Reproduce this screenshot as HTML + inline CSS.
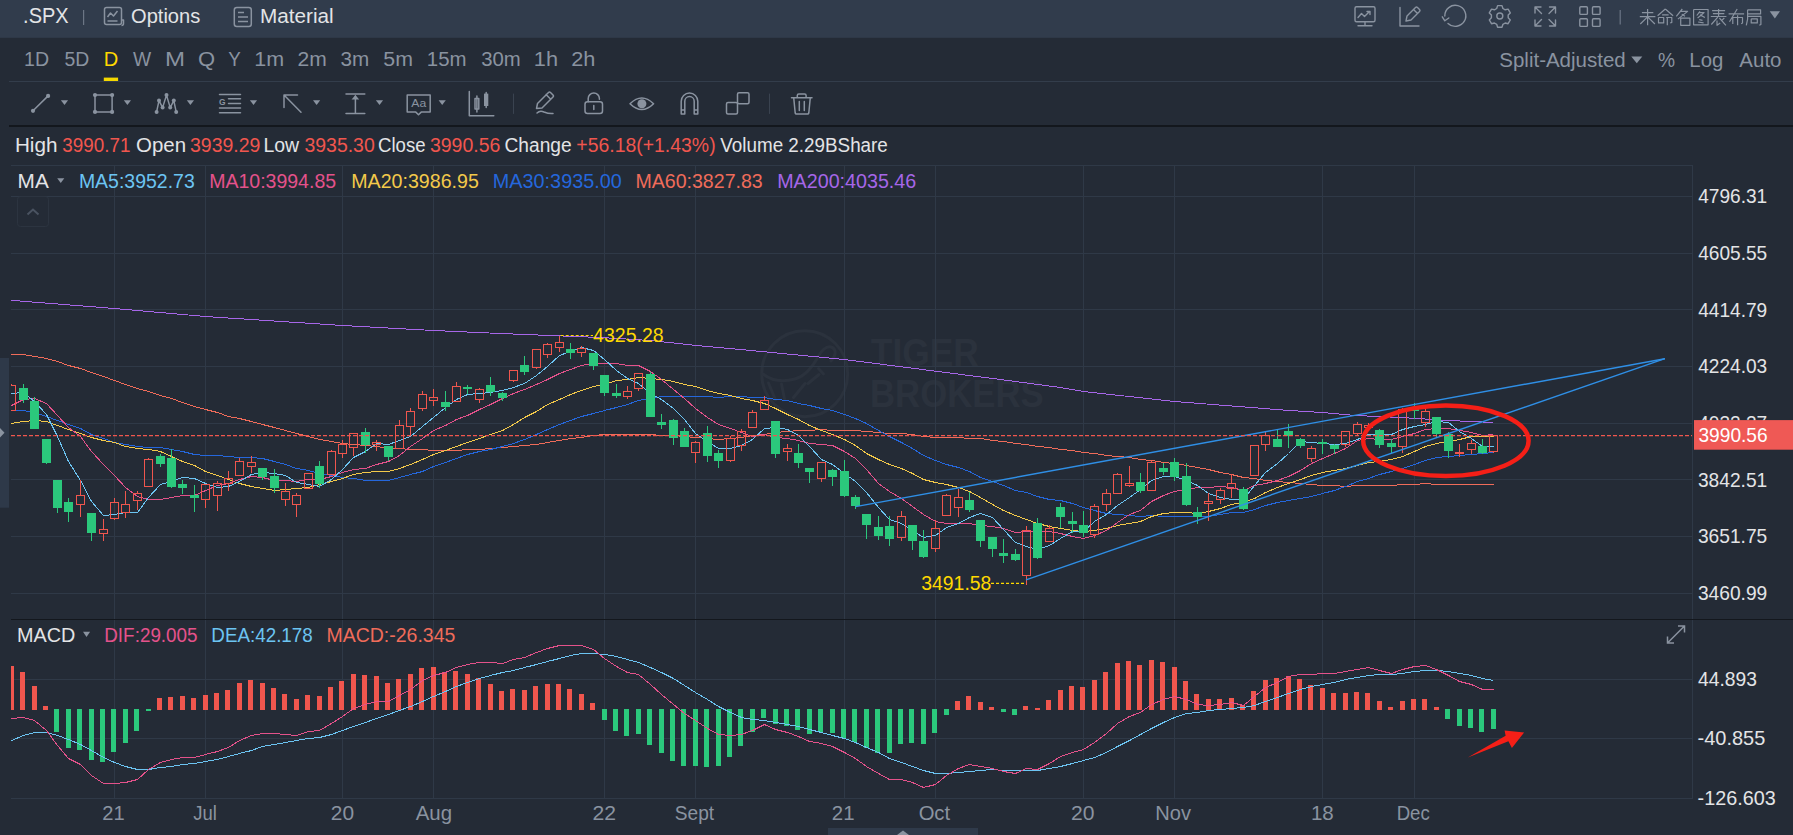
<!DOCTYPE html>
<html><head><meta charset="utf-8"><title>SPX</title>
<style>html,body{margin:0;padding:0;background:#242b36;overflow:hidden}svg{display:block;font-family:"Liberation Sans",sans-serif}</style>
</head><body>
<svg width="1793" height="835" viewBox="0 0 1793 835" font-family="Liberation Sans, sans-serif">
<rect x="0" y="0" width="1793" height="835" fill="#242b36"/>
<rect x="0" y="0" width="1793" height="37.8" fill="#313c4c"/>
<rect x="9" y="81" width="1784" height="1" fill="#333d4b"/>
<rect x="9" y="125" width="1784" height="2" fill="#13171d"/>
<rect x="11" y="619" width="1782" height="1" fill="#13171d"/>
<text x="23.08" y="23.3" fill="#e3e4e6" font-size="22.5" textLength="45.54" lengthAdjust="spacingAndGlyphs">.SPX</text>
<rect x="83" y="10" width="1.2" height="15" fill="#6c7685"/>
<g fill="none" stroke="#8a93a0" stroke-width="1.5" stroke-linejoin="round"><path d="M104.5,9.5 q0,-2 2,-2 h13 q2,0 2,2 v13 q0,2 -2,2 h-13 q-2,0 -2,-2 z"/><path d="M107.5,17 l3,-4 l3,3 l4,-5"/><path d="M107.5,21 h10"/><path d="M121.5,20 h2 v3.5 q0,2 -2,2"/></g>
<text x="131.05" y="23.3" fill="#e3e4e6" font-size="20.5" textLength="69.18" lengthAdjust="spacingAndGlyphs">Options</text>
<g fill="none" stroke="#8a93a0" stroke-width="1.5"><rect x="234.3" y="7.5" width="17" height="19" rx="2.5"/><path d="M238,12.5 h6 M238,17 h10 M238,21.5 h10"/></g>
<text x="260.00" y="23.4" fill="#e3e4e6" font-size="20.5" textLength="73.69" lengthAdjust="spacingAndGlyphs">Material</text>
<g fill="none" stroke="#8a93a0" stroke-width="1.4" stroke-linecap="round" stroke-linejoin="round"><rect x="1355" y="6.8" width="20" height="15" rx="1.5"/><path d="M1365,22 v3.5 M1358,25.8 h14"/><path d="M1358,17.5 l3.5,-4 l3,3 l5,-5 M1367,11.5 h3 v3"/><path d="M1400,7.5 v18.5 h19"/><path d="M1406,21 l1,-5 l8.5,-8.5 q1,-1 2,0 l2,2 q1,1 0,2 l-8.5,8.5 z M1413.5,9.5 l3.8,3.8"/><path d="M1444.8,16 A10.5,10.5 0 1 1 1448,23.4"/><path d="M1442.3,16.8 l2.5,4 l4,-2.8"/><circle cx="1499.8" cy="16" r="3"/><path d="M1497.6,5.6 h4.4 l0.9,2.9 l2.3,1.3 l2.9,-0.7 l2.2,3.8 l-2.1,2.2 v2.6 l2.1,2.2 l-2.2,3.8 l-2.9,-0.7 l-2.3,1.3 l-0.9,2.9 h-4.4 l-0.9,-2.9 l-2.3,-1.3 l-2.9,0.7 l-2.2,-3.8 l2.1,-2.2 v-2.6 l-2.1,-2.2 l2.2,-3.8 l2.9,0.7 l2.3,-1.3 z"/><path d="M1535,13 v-6 h6 M1535,7 l6.5,6.5 M1555.5,13 v-6 h-6 M1555.5,7 l-6.5,6.5 M1535,20 v6 h6 M1535,26 l6.5,-6.5 M1555.5,20 v6 h-6 M1555.5,26 l-6.5,-6.5"/><rect x="1579.8" y="6.8" width="7.6" height="7.6" rx="1"/><rect x="1592.5" y="6.8" width="7.6" height="7.6" rx="1"/><rect x="1579.8" y="18.8" width="7.6" height="7.6" rx="1"/><rect x="1592.5" y="18.8" width="7.6" height="7.6" rx="1"/></g>
<rect x="1619.6" y="10" width="1.2" height="14.5" fill="#6c7685"/>
<path d="M1641.9,12.6 L1653.3,12.6 M1639.8,16.7 L1655.4,16.7 M1647.6,9.0 L1647.6,25.3 M1647.3,17.1 L1640.3,24.0 M1647.9,17.1 L1654.9,24.0 M1665.3,9.0 L1657.6,15.8 M1665.3,9.0 L1673.1,15.8 M1662.1,14.9 L1668.6,14.9 M1658.5,17.5 L1663.7,17.5 L1663.7,22.9 L1658.5,22.9 L1658.5,17.5 M1666.2,17.5 L1671.8,17.5 L1671.8,22.4 L1670.2,23.0 M1667.3,17.5 L1667.3,25.3 M1682.3,9.0 L1676.3,16.3 M1680.3,11.4 L1687.6,11.4 L1677.9,19.1 M1681.8,14.2 L1685.0,16.3 M1680.7,18.1 L1689.9,18.1 L1689.9,25.3 L1680.7,25.3 L1680.7,18.1 M1693.6,9.5 L1708.1,9.5 L1708.1,24.8 L1693.6,24.8 L1693.6,9.5 M1700.0,11.3 L1696.8,15.5 M1698.4,12.6 L1704.1,12.6 L1697.6,18.0 M1700.0,14.9 L1704.9,17.5 M1699.2,19.6 L1702.5,20.4 M1698.1,22.0 L1703.6,22.9 M1712.1,10.6 L1725.1,10.6 M1712.9,13.6 L1724.3,13.6 M1710.8,16.5 L1726.4,16.5 M1718.6,9.0 L1718.6,16.5 M1717.8,17.1 L1711.3,24.5 M1717.0,20.4 L1717.0,25.3 L1720.2,22.9 M1719.4,18.0 L1725.9,25.3 M1724.3,18.0 L1721.8,20.4 M1728.6,13.9 L1744.1,13.9 M1737.2,9.0 L1729.5,21.7 M1732.8,17.5 L1732.8,24.0 M1732.8,17.5 L1742.5,17.5 L1742.5,23.0 L1741.2,23.7 M1737.6,15.2 L1737.6,25.3 M1747.6,9.8 L1760.6,9.8 L1760.6,13.9 L1747.6,13.9 M1747.6,9.8 L1747.6,19.1 L1746.3,25.3 M1747.6,16.3 L1760.9,16.3 L1760.9,24.5 L1759.3,25.3 M1751.2,18.8 L1757.3,18.8 L1757.3,22.9 L1751.2,22.9 L1751.2,18.8" fill="none" stroke="#8a93a0" stroke-width="1.2" stroke-linejoin="round"/>
<path d="M1769.7,11.2 h10.3 l-5.15,7.2 z" fill="#8a93a0"/>
<text x="24.01" y="65.9" fill="#8a93a0" font-size="20" textLength="25.03" lengthAdjust="spacingAndGlyphs">1D</text>
<text x="64.42" y="65.9" fill="#8a93a0" font-size="20" textLength="24.81" lengthAdjust="spacingAndGlyphs">5D</text>
<text x="103.85" y="65.9" fill="#ffd800" font-size="20" textLength="14.51" lengthAdjust="spacingAndGlyphs">D</text>
<text x="132.92" y="65.9" fill="#8a93a0" font-size="20" textLength="18.15" lengthAdjust="spacingAndGlyphs">W</text>
<text x="165.13" y="65.9" fill="#8a93a0" font-size="20" textLength="20.05" lengthAdjust="spacingAndGlyphs">M</text>
<text x="197.96" y="65.9" fill="#8a93a0" font-size="20" textLength="17.09" lengthAdjust="spacingAndGlyphs">Q</text>
<text x="228.19" y="65.9" fill="#8a93a0" font-size="20" textLength="12.53" lengthAdjust="spacingAndGlyphs">Y</text>
<text x="254.36" y="65.9" fill="#8a93a0" font-size="20" textLength="29.85" lengthAdjust="spacingAndGlyphs">1m</text>
<text x="297.44" y="65.9" fill="#8a93a0" font-size="20" textLength="29.25" lengthAdjust="spacingAndGlyphs">2m</text>
<text x="340.61" y="65.9" fill="#8a93a0" font-size="20" textLength="28.75" lengthAdjust="spacingAndGlyphs">3m</text>
<text x="383.35" y="65.9" fill="#8a93a0" font-size="20" textLength="29.66" lengthAdjust="spacingAndGlyphs">5m</text>
<text x="426.85" y="65.9" fill="#8a93a0" font-size="20" textLength="39.70" lengthAdjust="spacingAndGlyphs">15m</text>
<text x="481.23" y="65.9" fill="#8a93a0" font-size="20" textLength="39.51" lengthAdjust="spacingAndGlyphs">30m</text>
<text x="533.85" y="65.9" fill="#8a93a0" font-size="20" textLength="24.17" lengthAdjust="spacingAndGlyphs">1h</text>
<text x="571.21" y="65.9" fill="#8a93a0" font-size="20" textLength="24.21" lengthAdjust="spacingAndGlyphs">2h</text>
<rect x="103.8" y="77.6" width="14.3" height="3.4" fill="#f5d800"/>
<text x="1499.27" y="66.8" fill="#8a93a0" font-size="20" textLength="126.45" lengthAdjust="spacingAndGlyphs">Split-Adjusted</text>
<path d="M1631.3,56.4 h11 l-5.5,6.8 z" fill="#8a93a0"/>
<text x="1658.12" y="66.8" fill="#8a93a0" font-size="20" textLength="17.07" lengthAdjust="spacingAndGlyphs">%</text>
<text x="1689.33" y="66.8" fill="#8a93a0" font-size="20" textLength="33.98" lengthAdjust="spacingAndGlyphs">Log</text>
<text x="1739.36" y="66.8" fill="#8a93a0" font-size="20" textLength="42.10" lengthAdjust="spacingAndGlyphs">Auto</text>
<g fill="none" stroke="#8a93a0" stroke-width="1.5" stroke-linecap="round" stroke-linejoin="round"><path d="M33,110.8 L48.1,95.9"/><rect x="95" y="95.1" width="17.1" height="16.8"/><path d="M156.6,111.9 L159,100.6 L162.6,107.6 L166.5,95.1 L170.2,107.6 L173.8,100.6 L176.2,111.9"/><path d="M219.5,94.4 h21 M228.5,98.8 h12 M228.5,103.4 h12 M219.5,108.1 h21 M219.5,112.8 h21"/><path d="M284,95 L301,112.3 M284,95 h13.5 M284,95 v12.5"/><path d="M346,93.9 h18.8 M346,113.4 h18.8 M355.4,96 v17.4"/><path d="M407.2,95.1 h23 v17 h-9 l-2.7,2.6 l-2.7,-2.6 h-8.6 z"/><path d="M469.3,91.5 v24.3 h24.5 M476.9,96 v16 M486.2,92.5 v15"/><rect x="475" y="98.5" width="3.8" height="10.5"/><path d="M537,113 q3,-3 7,-1 q5,2 9,1.5"/><path d="M536.5,108.5 l1,-5 l11,-11 q1,-1 2,0 l2.5,2.5 q1,1 0,2 l-11,11 z M546,94.5 l4,4"/><rect x="585" y="101.8" width="17.5" height="11.7" rx="2.5"/><path d="M588.2,101.8 v-3.2 a5.6,5.6 0 0 1 11.2,0 v0.6 M593.8,105.5 v4"/><path d="M630,103.7 q11.8,-11.5 23.6,0 q-11.8,11.5 -23.6,0 z"/><path d="M681.2,114 v-12.7 a8.3,8.3 0 0 1 16.6,0 v12.7 h-3.6 v-12.7 a4.7,4.7 0 0 0 -9.4,0 v12.7 z M681.2,110 h3.6 M694.2,110 h3.6"/><rect x="726.5" y="102.5" width="11" height="11.5" rx="1.5"/><rect x="737.5" y="92.7" width="11.5" height="11" rx="1.5"/><path d="M791.5,97.8 h20.5 M797.3,97.8 v-2.2 q0,-1.5 1.5,-1.5 h5.8 q1.5,0 1.5,1.5 v2.2 M793.8,98.5 l1.4,14.5 q0.2,1 1.2,1 h11.2 q1,0 1.2,-1 l1.4,-14.5 M799.3,101.5 v9 M804.3,101.5 v9"/></g>
<g fill="#8a93a0"><circle cx="33" cy="110.8" r="2.1"/><circle cx="48.1" cy="95.9" r="2.1"/><circle cx="95" cy="95.1" r="2.1"/><circle cx="112.1" cy="95.1" r="2.1"/><circle cx="95" cy="111.9" r="2.1"/><circle cx="112.1" cy="111.9" r="2.1"/><circle cx="156.6" cy="111.9" r="2"/><circle cx="159" cy="100.6" r="2"/><circle cx="162.6" cy="107.6" r="2"/><circle cx="166.5" cy="95.1" r="2"/><circle cx="170.2" cy="107.6" r="2"/><circle cx="173.8" cy="100.6" r="2"/><circle cx="176.2" cy="111.9" r="2"/><path d="M355.4,95 l-3.8,4.5 h7.6 z"/><rect x="484" y="93.6" width="4.3" height="12.4"/><circle cx="641.9" cy="103.7" r="4.5"/></g>
<text x="218.95" y="105.2" fill="#8a93a0" font-size="9" font-weight="bold" textLength="6.57" lengthAdjust="spacingAndGlyphs">G</text>
<text x="411.28" y="106.9" fill="#8a93a0" font-size="11" textLength="14.92" lengthAdjust="spacingAndGlyphs">Aa</text>
<path d="M60.9,100.3 h7.2 l-3.6,4.7 z" fill="#8a93a0"/>
<path d="M123.8,100.3 h7.2 l-3.6,4.7 z" fill="#8a93a0"/>
<path d="M186.8,100.3 h7.2 l-3.6,4.7 z" fill="#8a93a0"/>
<path d="M249.9,100.3 h7.2 l-3.6,4.7 z" fill="#8a93a0"/>
<path d="M313,100.3 h7.2 l-3.6,4.7 z" fill="#8a93a0"/>
<path d="M375.9,100.3 h7.2 l-3.6,4.7 z" fill="#8a93a0"/>
<path d="M438.6,100.3 h7.2 l-3.6,4.7 z" fill="#8a93a0"/>
<rect x="513" y="93.6" width="1" height="20.3" fill="#3a4350"/>
<rect x="769" y="93.6" width="1" height="20.3" fill="#3a4350"/>
<text x="14.90" y="152" fill="#e3e4e6" font-size="20" textLength="42.54" lengthAdjust="spacingAndGlyphs">High</text>
<text x="62.28" y="152" fill="#f0564e" font-size="20" textLength="68.14" lengthAdjust="spacingAndGlyphs">3990.71</text>
<text x="136.03" y="152" fill="#e3e4e6" font-size="20" textLength="50.00" lengthAdjust="spacingAndGlyphs">Open</text>
<text x="190.06" y="152" fill="#f0564e" font-size="20" textLength="70.36" lengthAdjust="spacingAndGlyphs">3939.29</text>
<text x="263.40" y="152" fill="#e3e4e6" font-size="20" textLength="35.75" lengthAdjust="spacingAndGlyphs">Low</text>
<text x="304.46" y="152" fill="#f0564e" font-size="20" textLength="70.30" lengthAdjust="spacingAndGlyphs">3935.30</text>
<text x="378.06" y="152" fill="#e3e4e6" font-size="20" textLength="47.47" lengthAdjust="spacingAndGlyphs">Close</text>
<text x="429.96" y="152" fill="#f0564e" font-size="20" textLength="70.40" lengthAdjust="spacingAndGlyphs">3990.56</text>
<text x="504.53" y="152" fill="#e3e4e6" font-size="20" textLength="67.12" lengthAdjust="spacingAndGlyphs">Change</text>
<text x="576.35" y="152" fill="#f0564e" font-size="20" textLength="139.25" lengthAdjust="spacingAndGlyphs">+56.18(+1.43%)</text>
<text x="720.32" y="152" fill="#e3e4e6" font-size="20" textLength="167.51" lengthAdjust="spacingAndGlyphs">Volume 2.29BShare</text>
<g fill="none" stroke="#2b323d" stroke-width="3" stroke-linecap="round" stroke-linejoin="round"><circle cx="804.7" cy="373.7" r="43"/><path d="M763,374 C772,381 784,382 795,379 C806,376 813,366 818,357 C822,350 826,346 831,347 C837,349 836,356 831,361"/><path d="M768.5,383 L775.5,400 M781.5,384 L784.5,399 M793.5,397.5 L805,383.5 M808,383.5 L819,374.5 M818.5,368.5 L823.5,374"/></g>
<text x="870.80" y="365.7" fill="#2b323d" font-size="38" font-weight="bold" textLength="108.12" lengthAdjust="spacingAndGlyphs">TIGER</text>
<text x="869.98" y="407.3" fill="#2b323d" font-size="38" font-weight="bold" textLength="173.78" lengthAdjust="spacingAndGlyphs">BROKERS</text>
<g fill="#2f3947">
<rect x="11" y="165" width="1682" height="1"/>
<rect x="11" y="196" width="1682" height="1"/>
<rect x="11" y="253" width="1682" height="1"/>
<rect x="11" y="309" width="1682" height="1"/>
<rect x="11" y="366" width="1682" height="1"/>
<rect x="11" y="423" width="1682" height="1"/>
<rect x="11" y="479" width="1682" height="1"/>
<rect x="11" y="536" width="1682" height="1"/>
<rect x="11" y="593" width="1682" height="1"/>
<rect x="11" y="679" width="1682" height="1"/>
<rect x="11" y="738" width="1682" height="1"/>
<rect x="11" y="798" width="1682" height="1"/>
<rect x="1692" y="165" width="1" height="454"/>
<rect x="1692" y="620" width="1" height="179"/>
<rect x="114" y="165" width="1" height="454"/>
<rect x="114" y="620" width="1" height="179"/>
<rect x="205" y="165" width="1" height="454"/>
<rect x="205" y="620" width="1" height="179"/>
<rect x="342" y="165" width="1" height="454"/>
<rect x="342" y="620" width="1" height="179"/>
<rect x="433" y="165" width="1" height="454"/>
<rect x="433" y="620" width="1" height="179"/>
<rect x="604" y="165" width="1" height="454"/>
<rect x="604" y="620" width="1" height="179"/>
<rect x="695" y="165" width="1" height="454"/>
<rect x="695" y="620" width="1" height="179"/>
<rect x="844" y="165" width="1" height="454"/>
<rect x="844" y="620" width="1" height="179"/>
<rect x="935" y="165" width="1" height="454"/>
<rect x="935" y="620" width="1" height="179"/>
<rect x="1083" y="165" width="1" height="454"/>
<rect x="1083" y="620" width="1" height="179"/>
<rect x="1174" y="165" width="1" height="454"/>
<rect x="1174" y="620" width="1" height="179"/>
<rect x="1322" y="165" width="1" height="454"/>
<rect x="1322" y="620" width="1" height="179"/>
<rect x="1414" y="165" width="1" height="454"/>
<rect x="1414" y="620" width="1" height="179"/>
</g>
<text x="17.60" y="187.8" fill="#e3e4e6" font-size="19.7" textLength="31.14" lengthAdjust="spacingAndGlyphs">MA</text>
<path d="M57.2,178.2 h7.1 l-3.55,4.8 z" fill="#8a93a0"/>
<text x="78.90" y="187.8" fill="#6cc4f2" font-size="19.7" textLength="115.85" lengthAdjust="spacingAndGlyphs">MA5:3952.73</text>
<text x="209.20" y="187.8" fill="#e4528b" font-size="19.7" textLength="126.92" lengthAdjust="spacingAndGlyphs">MA10:3994.85</text>
<text x="351.29" y="187.8" fill="#f3c94a" font-size="19.7" textLength="127.53" lengthAdjust="spacingAndGlyphs">MA20:3986.95</text>
<text x="492.87" y="187.8" fill="#2567dc" font-size="19.7" textLength="128.90" lengthAdjust="spacingAndGlyphs">MA30:3935.00</text>
<text x="635.39" y="187.8" fill="#f06c5a" font-size="19.7" textLength="127.37" lengthAdjust="spacingAndGlyphs">MA60:3827.83</text>
<text x="777.18" y="187.8" fill="#a666e8" font-size="19.7" textLength="139.08" lengthAdjust="spacingAndGlyphs">MA200:4035.46</text>
<rect x="17.5" y="196.5" width="31" height="30" rx="3" fill="none" stroke="#2c3440" stroke-width="1"/>
<path d="M27.5,214.5 l5.5,-5 l5.5,5" fill="none" stroke="#4a5361" stroke-width="2"/>
<defs><clipPath id="cp"><rect x="11" y="166" width="1681.5" height="452"/></clipPath><clipPath id="cm"><rect x="11" y="620" width="1681.5" height="178"/></clipPath></defs>
<g clip-path="url(#cp)">
<polyline points="0.5,354.5 11.5,354.5 23.5,354.5 34.5,356.5 46.5,358.5 57.5,361.5 68.5,365.5 80.5,368.5 91.5,372.5 103.5,376.5 114.5,380.5 125.5,384.5 137.5,388.5 148.5,391.5 160.5,395.5 171.5,398.5 182.5,402.5 194.5,406.5 205.5,409.5 217.5,412.5 228.5,416.5 239.5,418.5 251.5,421.5 262.5,424.5 274.5,427.5 285.5,430.5 296.5,433.5 308.5,436.5 319.5,439.5 331.5,441.5 342.5,443.5 353.5,444.5 365.5,445.5 376.5,446.5 388.5,448.5 399.5,448.5 410.5,449.5 422.5,449.5 433.5,450.5 445.5,450.5 456.5,450.5 467.5,449.5 479.5,449.5 490.5,448.5 502.5,447.5 513.5,446.5 524.5,445.5 536.5,444.5 547.5,442.5 559.5,440.5 570.5,438.5 581.5,437.5 593.5,435.5 604.5,434.5 616.5,434.5 627.5,434.5 638.5,434.5 650.5,434.5 661.5,435.5 673.5,435.5 684.5,436.5 695.5,437.5 707.5,438.5 718.5,439.5 730.5,438.5 741.5,437.5 752.5,435.5 764.5,434.5 775.5,432.5 787.5,431.5 798.5,430.5 809.5,430.5 821.5,429.5 832.5,430.5 844.5,430.5 855.5,430.5 866.5,431.5 878.5,432.5 889.5,433.5 901.5,433.5 912.5,434.5 923.5,436.5 935.5,437.5 946.5,437.5 958.5,437.5 969.5,438.5 980.5,438.5 992.5,440.5 1003.5,441.5 1015.5,443.5 1026.5,444.5 1037.5,446.5 1049.5,447.5 1060.5,449.5 1072.5,450.5 1083.5,452.5 1094.5,453.5 1106.5,455.5 1117.5,456.5 1129.5,457.5 1140.5,459.5 1151.5,460.5 1163.5,462.5 1174.5,463.5 1186.5,465.5 1197.5,467.5 1208.5,469.5 1220.5,472.5 1231.5,474.5 1243.5,477.5 1254.5,478.5 1265.5,480.5 1277.5,481.5 1288.5,482.5 1300.5,483.5 1311.5,484.5 1322.5,485.5 1334.5,485.5 1345.5,486.5 1357.5,485.5 1368.5,485.5 1379.5,485.5 1391.5,485.5 1402.5,484.5 1414.5,484.5 1425.5,483.5 1436.5,484.5 1448.5,484.5 1459.5,484.5 1471.5,484.5 1482.5,484.5 1493.5,484.5" fill="none" stroke="#f06c5a" stroke-width="1" stroke-linejoin="round" shape-rendering="crispEdges"/>
<polyline points="0.5,408.5 11.5,410.5 23.5,410.5 34.5,412.5 46.5,416.5 57.5,420.5 68.5,424.5 80.5,428.5 91.5,434.5 103.5,438.5 114.5,442.5 125.5,444.5 137.5,446.5 148.5,447.5 160.5,447.5 171.5,449.5 182.5,451.5 194.5,454.5 205.5,455.5 217.5,455.5 228.5,456.5 239.5,457.5 251.5,457.5 262.5,458.5 274.5,461.5 285.5,464.5 296.5,468.5 308.5,470.5 319.5,473.5 331.5,475.5 342.5,477.5 353.5,478.5 365.5,480.5 376.5,480.5 388.5,480.5 399.5,477.5 410.5,474.5 422.5,471.5 433.5,466.5 445.5,462.5 456.5,458.5 467.5,454.5 479.5,451.5 490.5,449.5 502.5,446.5 513.5,443.5 524.5,439.5 536.5,434.5 547.5,429.5 559.5,424.5 570.5,420.5 581.5,416.5 593.5,413.5 604.5,410.5 616.5,407.5 627.5,404.5 638.5,400.5 650.5,398.5 661.5,396.5 673.5,396.5 684.5,396.5 695.5,396.5 707.5,396.5 718.5,397.5 730.5,396.5 741.5,396.5 752.5,397.5 764.5,397.5 775.5,399.5 787.5,400.5 798.5,403.5 809.5,405.5 821.5,408.5 832.5,410.5 844.5,414.5 855.5,418.5 866.5,423.5 878.5,430.5 889.5,436.5 901.5,442.5 912.5,448.5 923.5,455.5 935.5,460.5 946.5,464.5 958.5,467.5 969.5,471.5 980.5,477.5 992.5,481.5 1003.5,485.5 1015.5,490.5 1026.5,492.5 1037.5,496.5 1049.5,499.5 1060.5,500.5 1072.5,503.5 1083.5,507.5 1094.5,510.5 1106.5,513.5 1117.5,514.5 1129.5,515.5 1140.5,516.5 1151.5,515.5 1163.5,516.5 1174.5,516.5 1186.5,516.5 1197.5,516.5 1208.5,516.5 1220.5,514.5 1231.5,512.5 1243.5,512.5 1254.5,509.5 1265.5,505.5 1277.5,502.5 1288.5,500.5 1300.5,498.5 1311.5,496.5 1322.5,493.5 1334.5,490.5 1345.5,486.5 1357.5,481.5 1368.5,478.5 1379.5,474.5 1391.5,471.5 1402.5,468.5 1414.5,464.5 1425.5,460.5 1436.5,457.5 1448.5,456.5 1459.5,455.5 1471.5,454.5 1482.5,453.5 1493.5,452.5" fill="none" stroke="#2567dc" stroke-width="1" stroke-linejoin="round" shape-rendering="crispEdges"/>
<polyline points="0.5,426.5 11.5,423.5 23.5,421.5 34.5,420.5 46.5,421.5 57.5,425.5 68.5,429.5 80.5,433.5 91.5,437.5 103.5,440.5 114.5,442.5 125.5,446.5 137.5,448.5 148.5,449.5 160.5,451.5 171.5,456.5 182.5,461.5 194.5,465.5 205.5,471.5 217.5,475.5 228.5,479.5 239.5,483.5 251.5,486.5 262.5,488.5 274.5,490.5 285.5,489.5 296.5,488.5 308.5,487.5 319.5,484.5 331.5,481.5 342.5,478.5 353.5,474.5 365.5,472.5 376.5,471.5 388.5,471.5 399.5,468.5 410.5,464.5 422.5,459.5 433.5,454.5 445.5,450.5 456.5,446.5 467.5,442.5 479.5,438.5 490.5,434.5 502.5,430.5 513.5,424.5 524.5,417.5 536.5,411.5 547.5,404.5 559.5,399.5 570.5,394.5 581.5,390.5 593.5,386.5 604.5,384.5 616.5,380.5 627.5,379.5 638.5,377.5 650.5,378.5 661.5,379.5 673.5,381.5 684.5,384.5 695.5,386.5 707.5,390.5 718.5,393.5 730.5,395.5 741.5,398.5 752.5,400.5 764.5,403.5 775.5,408.5 787.5,414.5 798.5,419.5 809.5,425.5 821.5,430.5 832.5,434.5 844.5,439.5 855.5,445.5 866.5,453.5 878.5,459.5 889.5,464.5 901.5,468.5 912.5,473.5 923.5,479.5 935.5,482.5 946.5,484.5 958.5,487.5 969.5,491.5 980.5,497.5 992.5,504.5 1003.5,510.5 1015.5,515.5 1026.5,519.5 1037.5,523.5 1049.5,526.5 1060.5,528.5 1072.5,530.5 1083.5,531.5 1094.5,530.5 1106.5,528.5 1117.5,525.5 1129.5,523.5 1140.5,521.5 1151.5,516.5 1163.5,513.5 1174.5,512.5 1186.5,512.5 1197.5,513.5 1208.5,511.5 1220.5,508.5 1231.5,504.5 1243.5,502.5 1254.5,498.5 1265.5,492.5 1277.5,487.5 1288.5,483.5 1300.5,479.5 1311.5,475.5 1322.5,472.5 1334.5,470.5 1345.5,468.5 1357.5,465.5 1368.5,462.5 1379.5,461.5 1391.5,459.5 1402.5,456.5 1414.5,451.5 1425.5,446.5 1436.5,443.5 1448.5,441.5 1459.5,439.5 1471.5,436.5 1482.5,436.5 1493.5,436.5" fill="none" stroke="#f3c94a" stroke-width="1" stroke-linejoin="round" shape-rendering="crispEdges"/>
<polyline points="0.5,410.5 11.5,405.5 23.5,399.5 34.5,398.5 46.5,403.5 57.5,415.5 68.5,427.5 80.5,436.5 91.5,451.5 103.5,464.5 114.5,475.5 125.5,487.5 137.5,496.5 148.5,499.5 160.5,499.5 171.5,497.5 182.5,495.5 194.5,495.5 205.5,490.5 217.5,485.5 228.5,483.5 239.5,479.5 251.5,476.5 262.5,477.5 274.5,480.5 285.5,480.5 296.5,481.5 308.5,479.5 319.5,479.5 331.5,476.5 342.5,472.5 353.5,469.5 365.5,468.5 376.5,464.5 388.5,461.5 399.5,455.5 410.5,446.5 422.5,438.5 433.5,430.5 445.5,425.5 456.5,419.5 467.5,415.5 479.5,409.5 490.5,404.5 502.5,398.5 513.5,393.5 524.5,389.5 536.5,384.5 547.5,379.5 559.5,373.5 570.5,369.5 581.5,365.5 593.5,363.5 604.5,363.5 616.5,363.5 627.5,365.5 638.5,365.5 650.5,371.5 661.5,379.5 673.5,389.5 684.5,398.5 695.5,408.5 707.5,417.5 718.5,424.5 730.5,428.5 741.5,432.5 752.5,436.5 764.5,434.5 775.5,437.5 787.5,438.5 798.5,440.5 809.5,443.5 821.5,444.5 832.5,445.5 844.5,451.5 855.5,458.5 866.5,469.5 878.5,483.5 889.5,491.5 901.5,498.5 912.5,506.5 923.5,514.5 935.5,521.5 946.5,523.5 958.5,523.5 969.5,523.5 980.5,525.5 992.5,526.5 1003.5,528.5 1015.5,532.5 1026.5,531.5 1037.5,531.5 1049.5,531.5 1060.5,533.5 1072.5,536.5 1083.5,538.5 1094.5,535.5 1106.5,530.5 1117.5,522.5 1129.5,514.5 1140.5,510.5 1151.5,501.5 1163.5,495.5 1174.5,491.5 1186.5,489.5 1197.5,487.5 1208.5,487.5 1220.5,486.5 1231.5,487.5 1243.5,490.5 1254.5,485.5 1265.5,483.5 1277.5,480.5 1288.5,476.5 1300.5,470.5 1311.5,463.5 1322.5,458.5 1334.5,453.5 1345.5,448.5 1357.5,440.5 1368.5,438.5 1379.5,439.5 1391.5,439.5 1402.5,436.5 1414.5,433.5 1425.5,429.5 1436.5,428.5 1448.5,428.5 1459.5,430.5 1471.5,432.5 1482.5,435.5 1493.5,434.5" fill="none" stroke="#e4528b" stroke-width="1" stroke-linejoin="round" shape-rendering="crispEdges"/>
<polyline points="0.5,394.5 11.5,393.5 23.5,392.5 34.5,401.5 46.5,414.5 57.5,436.5 68.5,461.5 80.5,480.5 91.5,501.5 103.5,515.5 114.5,514.5 125.5,512.5 137.5,512.5 148.5,497.5 160.5,484.5 171.5,481.5 182.5,477.5 194.5,478.5 205.5,483.5 217.5,487.5 228.5,486.5 239.5,481.5 251.5,474.5 262.5,472.5 274.5,473.5 285.5,475.5 296.5,482.5 308.5,484.5 319.5,486.5 331.5,479.5 342.5,469.5 353.5,457.5 365.5,451.5 376.5,443.5 388.5,444.5 399.5,440.5 410.5,436.5 422.5,426.5 433.5,417.5 445.5,407.5 456.5,399.5 467.5,394.5 479.5,393.5 490.5,392.5 502.5,390.5 513.5,387.5 524.5,383.5 536.5,375.5 547.5,366.5 559.5,355.5 570.5,351.5 581.5,347.5 593.5,350.5 604.5,359.5 616.5,370.5 627.5,378.5 638.5,383.5 650.5,393.5 661.5,399.5 673.5,408.5 684.5,419.5 695.5,433.5 707.5,441.5 718.5,448.5 730.5,448.5 741.5,445.5 752.5,439.5 764.5,428.5 775.5,427.5 787.5,429.5 798.5,435.5 809.5,446.5 821.5,459.5 832.5,464.5 844.5,473.5 855.5,481.5 866.5,492.5 878.5,507.5 889.5,519.5 901.5,523.5 912.5,530.5 923.5,537.5 935.5,535.5 946.5,527.5 958.5,523.5 969.5,517.5 980.5,513.5 992.5,517.5 1003.5,529.5 1015.5,542.5 1026.5,546.5 1037.5,549.5 1049.5,545.5 1060.5,538.5 1072.5,531.5 1083.5,531.5 1094.5,521.5 1106.5,514.5 1117.5,505.5 1129.5,497.5 1140.5,489.5 1151.5,480.5 1163.5,476.5 1174.5,476.5 1186.5,480.5 1197.5,485.5 1208.5,493.5 1220.5,497.5 1231.5,499.5 1243.5,499.5 1254.5,485.5 1265.5,472.5 1277.5,463.5 1288.5,453.5 1300.5,441.5 1311.5,442.5 1322.5,443.5 1334.5,444.5 1345.5,443.5 1357.5,439.5 1368.5,434.5 1379.5,434.5 1391.5,434.5 1402.5,429.5 1414.5,426.5 1425.5,424.5 1436.5,421.5 1448.5,422.5 1459.5,431.5 1471.5,438.5 1482.5,446.5 1493.5,446.5" fill="none" stroke="#6cc4f2" stroke-width="1" stroke-linejoin="round" shape-rendering="crispEdges"/>
<polyline points="0.5,299.5 114.5,308.5 205.5,316.5 342.5,325.5 433.5,330.5 500.5,333.5 600.5,337.5 650.5,340.5 696.5,345.5 740.5,349.5 844.5,359.5 1000.5,379.5 1060.5,387.5 1083.5,391.5 1174.5,401.5 1289.5,410.5 1322.5,412.5 1355.5,415.5 1400.5,417.5 1448.5,420.5 1493.5,422.5" fill="none" stroke="#a666e8" stroke-width="1" shape-rendering="crispEdges"/>
<path d="M11.5,384V385" stroke="#f0564e" stroke-width="1"/>
<rect x="7.5" y="385.5" width="8" height="25" fill="none" stroke="#f0564e" stroke-width="1"/>
<rect x="23" y="384" width="1" height="19" fill="#2bc87c"/>
<rect x="19" y="388" width="9" height="12" fill="#2bc87c"/>
<rect x="34" y="397" width="1" height="32" fill="#2bc87c"/>
<rect x="30" y="401" width="9" height="28" fill="#2bc87c"/>
<rect x="46" y="439" width="1" height="25" fill="#2bc87c"/>
<rect x="42" y="439" width="9" height="24" fill="#2bc87c"/>
<rect x="57" y="480" width="1" height="33" fill="#2bc87c"/>
<rect x="53" y="480" width="9" height="28" fill="#2bc87c"/>
<rect x="68" y="498" width="1" height="24" fill="#2bc87c"/>
<rect x="64" y="502" width="9" height="10" fill="#2bc87c"/>
<path d="M80.5,480V495M80.5,505V517" stroke="#f0564e" stroke-width="1"/>
<rect x="76.5" y="495.5" width="8" height="9" fill="none" stroke="#f0564e" stroke-width="1"/>
<rect x="91" y="513" width="1" height="28" fill="#2bc87c"/>
<rect x="87" y="513" width="9" height="20" fill="#2bc87c"/>
<path d="M103.5,519V529M103.5,534V541" stroke="#f0564e" stroke-width="1"/>
<rect x="99.5" y="529.5" width="8" height="4" fill="none" stroke="#f0564e" stroke-width="1"/>
<path d="M114.5,498V502M114.5,519V520" stroke="#f0564e" stroke-width="1"/>
<rect x="110.5" y="502.5" width="8" height="16" fill="none" stroke="#f0564e" stroke-width="1"/>
<path d="M125.5,491V504M125.5,513V518" stroke="#f0564e" stroke-width="1"/>
<rect x="121.5" y="504.5" width="8" height="8" fill="none" stroke="#f0564e" stroke-width="1"/>
<path d="M137.5,491V493M137.5,501V510" stroke="#f0564e" stroke-width="1"/>
<rect x="133.5" y="493.5" width="8" height="7" fill="none" stroke="#f0564e" stroke-width="1"/>
<path d="M148.5,458V459" stroke="#f0564e" stroke-width="1"/>
<rect x="144.5" y="459.5" width="8" height="27" fill="none" stroke="#f0564e" stroke-width="1"/>
<rect x="160" y="454" width="1" height="13" fill="#2bc87c"/>
<rect x="156" y="456" width="9" height="8" fill="#2bc87c"/>
<rect x="171" y="449" width="1" height="39" fill="#2bc87c"/>
<rect x="167" y="458" width="9" height="29" fill="#2bc87c"/>
<rect x="182" y="480" width="1" height="14" fill="#2bc87c"/>
<rect x="178" y="484" width="9" height="4" fill="#2bc87c"/>
<rect x="194" y="485" width="1" height="27" fill="#2bc87c"/>
<rect x="190" y="495" width="9" height="3" fill="#2bc87c"/>
<path d="M205.5,500V508" stroke="#f0564e" stroke-width="1"/>
<rect x="201.5" y="484.5" width="8" height="15" fill="none" stroke="#f0564e" stroke-width="1"/>
<path d="M217.5,481V483M217.5,496V511" stroke="#f0564e" stroke-width="1"/>
<rect x="213.5" y="483.5" width="8" height="12" fill="none" stroke="#f0564e" stroke-width="1"/>
<path d="M228.5,471V478M228.5,484V491" stroke="#f0564e" stroke-width="1"/>
<rect x="224.5" y="478.5" width="8" height="5" fill="none" stroke="#f0564e" stroke-width="1"/>
<path d="M239.5,458V461" stroke="#f0564e" stroke-width="1"/>
<rect x="235.5" y="461.5" width="8" height="14" fill="none" stroke="#f0564e" stroke-width="1"/>
<path d="M251.5,456V462M251.5,467V473" stroke="#f0564e" stroke-width="1"/>
<rect x="247.5" y="462.5" width="8" height="4" fill="none" stroke="#f0564e" stroke-width="1"/>
<rect x="262" y="468" width="1" height="12" fill="#2bc87c"/>
<rect x="258" y="468" width="9" height="9" fill="#2bc87c"/>
<rect x="274" y="469" width="1" height="24" fill="#2bc87c"/>
<rect x="270" y="476" width="9" height="12" fill="#2bc87c"/>
<path d="M285.5,483V491M285.5,500V506" stroke="#f0564e" stroke-width="1"/>
<rect x="281.5" y="491.5" width="8" height="8" fill="none" stroke="#f0564e" stroke-width="1"/>
<path d="M296.5,493V495M296.5,505V517" stroke="#f0564e" stroke-width="1"/>
<rect x="292.5" y="495.5" width="8" height="9" fill="none" stroke="#f0564e" stroke-width="1"/>
<rect x="304.5" y="473.5" width="8" height="15" fill="none" stroke="#f0564e" stroke-width="1"/>
<rect x="319" y="461" width="1" height="27" fill="#2bc87c"/>
<rect x="315" y="466" width="9" height="18" fill="#2bc87c"/>
<path d="M331.5,450V451" stroke="#f0564e" stroke-width="1"/>
<rect x="327.5" y="451.5" width="8" height="23" fill="none" stroke="#f0564e" stroke-width="1"/>
<path d="M342.5,440V444M342.5,454V458" stroke="#f0564e" stroke-width="1"/>
<rect x="338.5" y="444.5" width="8" height="9" fill="none" stroke="#f0564e" stroke-width="1"/>
<path d="M353.5,448V456" stroke="#f0564e" stroke-width="1"/>
<rect x="349.5" y="433.5" width="8" height="14" fill="none" stroke="#f0564e" stroke-width="1"/>
<rect x="365" y="428" width="1" height="25" fill="#2bc87c"/>
<rect x="361" y="432" width="9" height="13" fill="#2bc87c"/>
<path d="M376.5,440V442M376.5,445V451" stroke="#f0564e" stroke-width="1"/>
<rect x="372.5" y="442.5" width="8" height="2" fill="none" stroke="#f0564e" stroke-width="1"/>
<rect x="388" y="446" width="1" height="15" fill="#2bc87c"/>
<rect x="384" y="446" width="9" height="11" fill="#2bc87c"/>
<path d="M399.5,420V425" stroke="#f0564e" stroke-width="1"/>
<rect x="395.5" y="425.5" width="8" height="23" fill="none" stroke="#f0564e" stroke-width="1"/>
<path d="M410.5,408V411M410.5,427V436" stroke="#f0564e" stroke-width="1"/>
<rect x="406.5" y="411.5" width="8" height="15" fill="none" stroke="#f0564e" stroke-width="1"/>
<path d="M422.5,391V394M422.5,409V411" stroke="#f0564e" stroke-width="1"/>
<rect x="418.5" y="394.5" width="8" height="14" fill="none" stroke="#f0564e" stroke-width="1"/>
<path d="M433.5,389V397M433.5,401V406" stroke="#f0564e" stroke-width="1"/>
<rect x="429.5" y="397.5" width="8" height="3" fill="none" stroke="#f0564e" stroke-width="1"/>
<rect x="445" y="391" width="1" height="20" fill="#2bc87c"/>
<rect x="441" y="402" width="9" height="5" fill="#2bc87c"/>
<path d="M456.5,382V386" stroke="#f0564e" stroke-width="1"/>
<rect x="452.5" y="386.5" width="8" height="15" fill="none" stroke="#f0564e" stroke-width="1"/>
<rect x="467" y="385" width="1" height="9" fill="#2bc87c"/>
<rect x="463" y="387" width="9" height="2" fill="#2bc87c"/>
<path d="M479.5,388V389M479.5,400V403" stroke="#f0564e" stroke-width="1"/>
<rect x="475.5" y="389.5" width="8" height="10" fill="none" stroke="#f0564e" stroke-width="1"/>
<rect x="490" y="377" width="1" height="19" fill="#2bc87c"/>
<rect x="486" y="385" width="9" height="7" fill="#2bc87c"/>
<rect x="502" y="392" width="1" height="9" fill="#2bc87c"/>
<rect x="498" y="393" width="9" height="5" fill="#2bc87c"/>
<path d="M513.5,381V382" stroke="#f0564e" stroke-width="1"/>
<rect x="509.5" y="370.5" width="8" height="10" fill="none" stroke="#f0564e" stroke-width="1"/>
<rect x="524" y="356" width="1" height="19" fill="#2bc87c"/>
<rect x="520" y="365" width="9" height="7" fill="#2bc87c"/>
<path d="M536.5,368V369" stroke="#f0564e" stroke-width="1"/>
<rect x="532.5" y="349.5" width="8" height="18" fill="none" stroke="#f0564e" stroke-width="1"/>
<path d="M547.5,343V344M547.5,355V358" stroke="#f0564e" stroke-width="1"/>
<rect x="543.5" y="344.5" width="8" height="10" fill="none" stroke="#f0564e" stroke-width="1"/>
<path d="M559.5,336V342M559.5,348V352" stroke="#f0564e" stroke-width="1"/>
<rect x="555.5" y="342.5" width="8" height="5" fill="none" stroke="#f0564e" stroke-width="1"/>
<rect x="570" y="343" width="1" height="16" fill="#2bc87c"/>
<rect x="566" y="349" width="9" height="4" fill="#2bc87c"/>
<path d="M581.5,346V348M581.5,353V357" stroke="#f0564e" stroke-width="1"/>
<rect x="577.5" y="348.5" width="8" height="4" fill="none" stroke="#f0564e" stroke-width="1"/>
<rect x="593" y="353" width="1" height="17" fill="#2bc87c"/>
<rect x="589" y="353" width="9" height="13" fill="#2bc87c"/>
<rect x="604" y="375" width="1" height="21" fill="#2bc87c"/>
<rect x="600" y="375" width="9" height="18" fill="#2bc87c"/>
<rect x="616" y="384" width="1" height="14" fill="#2bc87c"/>
<rect x="612" y="393" width="9" height="3" fill="#2bc87c"/>
<path d="M627.5,386V391M627.5,397V399" stroke="#f0564e" stroke-width="1"/>
<rect x="623.5" y="391.5" width="8" height="5" fill="none" stroke="#f0564e" stroke-width="1"/>
<path d="M638.5,389V391" stroke="#f0564e" stroke-width="1"/>
<rect x="634.5" y="373.5" width="8" height="15" fill="none" stroke="#f0564e" stroke-width="1"/>
<rect x="650" y="372" width="1" height="45" fill="#2bc87c"/>
<rect x="646" y="374" width="9" height="43" fill="#2bc87c"/>
<rect x="661" y="414" width="1" height="15" fill="#2bc87c"/>
<rect x="657" y="422" width="9" height="3" fill="#2bc87c"/>
<rect x="673" y="419" width="1" height="26" fill="#2bc87c"/>
<rect x="669" y="420" width="9" height="18" fill="#2bc87c"/>
<rect x="684" y="428" width="1" height="19" fill="#2bc87c"/>
<rect x="680" y="431" width="9" height="16" fill="#2bc87c"/>
<path d="M695.5,441V442M695.5,453V463" stroke="#f0564e" stroke-width="1"/>
<rect x="691.5" y="442.5" width="8" height="10" fill="none" stroke="#f0564e" stroke-width="1"/>
<rect x="707" y="426" width="1" height="36" fill="#2bc87c"/>
<rect x="703" y="433" width="9" height="23" fill="#2bc87c"/>
<rect x="718" y="450" width="1" height="18" fill="#2bc87c"/>
<rect x="714" y="453" width="9" height="8" fill="#2bc87c"/>
<path d="M730.5,436V438M730.5,461V462" stroke="#f0564e" stroke-width="1"/>
<rect x="726.5" y="438.5" width="8" height="22" fill="none" stroke="#f0564e" stroke-width="1"/>
<path d="M741.5,429V431M741.5,446V451" stroke="#f0564e" stroke-width="1"/>
<rect x="737.5" y="431.5" width="8" height="14" fill="none" stroke="#f0564e" stroke-width="1"/>
<path d="M752.5,410V412" stroke="#f0564e" stroke-width="1"/>
<rect x="748.5" y="412.5" width="8" height="15" fill="none" stroke="#f0564e" stroke-width="1"/>
<path d="M764.5,396V400" stroke="#f0564e" stroke-width="1"/>
<rect x="760.5" y="400.5" width="8" height="9" fill="none" stroke="#f0564e" stroke-width="1"/>
<rect x="775" y="421" width="1" height="37" fill="#2bc87c"/>
<rect x="771" y="421" width="9" height="33" fill="#2bc87c"/>
<path d="M787.5,444V448M787.5,452V461" stroke="#f0564e" stroke-width="1"/>
<rect x="783.5" y="448.5" width="8" height="3" fill="none" stroke="#f0564e" stroke-width="1"/>
<rect x="798" y="444" width="1" height="24" fill="#2bc87c"/>
<rect x="794" y="453" width="9" height="10" fill="#2bc87c"/>
<rect x="809" y="468" width="1" height="15" fill="#2bc87c"/>
<rect x="805" y="468" width="9" height="4" fill="#2bc87c"/>
<path d="M821.5,479V482" stroke="#f0564e" stroke-width="1"/>
<rect x="817.5" y="462.5" width="8" height="16" fill="none" stroke="#f0564e" stroke-width="1"/>
<rect x="832" y="469" width="1" height="17" fill="#2bc87c"/>
<rect x="828" y="470" width="9" height="7" fill="#2bc87c"/>
<rect x="844" y="460" width="1" height="37" fill="#2bc87c"/>
<rect x="840" y="471" width="9" height="25" fill="#2bc87c"/>
<rect x="855" y="495" width="1" height="14" fill="#2bc87c"/>
<rect x="851" y="497" width="9" height="9" fill="#2bc87c"/>
<rect x="866" y="514" width="1" height="25" fill="#2bc87c"/>
<rect x="862" y="514" width="9" height="11" fill="#2bc87c"/>
<rect x="878" y="516" width="1" height="24" fill="#2bc87c"/>
<rect x="874" y="527" width="9" height="9" fill="#2bc87c"/>
<rect x="889" y="516" width="1" height="30" fill="#2bc87c"/>
<rect x="885" y="526" width="9" height="13" fill="#2bc87c"/>
<path d="M901.5,511V516M901.5,538V541" stroke="#f0564e" stroke-width="1"/>
<rect x="897.5" y="516.5" width="8" height="21" fill="none" stroke="#f0564e" stroke-width="1"/>
<rect x="912" y="525" width="1" height="25" fill="#2bc87c"/>
<rect x="908" y="525" width="9" height="16" fill="#2bc87c"/>
<rect x="923" y="530" width="1" height="28" fill="#2bc87c"/>
<rect x="919" y="541" width="9" height="16" fill="#2bc87c"/>
<path d="M935.5,520V528M935.5,549V552" stroke="#f0564e" stroke-width="1"/>
<rect x="931.5" y="528.5" width="8" height="20" fill="none" stroke="#f0564e" stroke-width="1"/>
<path d="M946.5,494V495" stroke="#f0564e" stroke-width="1"/>
<rect x="942.5" y="495.5" width="8" height="20" fill="none" stroke="#f0564e" stroke-width="1"/>
<path d="M958.5,489V497M958.5,508V517" stroke="#f0564e" stroke-width="1"/>
<rect x="954.5" y="497.5" width="8" height="10" fill="none" stroke="#f0564e" stroke-width="1"/>
<rect x="969" y="492" width="1" height="20" fill="#2bc87c"/>
<rect x="965" y="500" width="9" height="10" fill="#2bc87c"/>
<rect x="980" y="520" width="1" height="27" fill="#2bc87c"/>
<rect x="976" y="520" width="9" height="21" fill="#2bc87c"/>
<rect x="992" y="537" width="1" height="20" fill="#2bc87c"/>
<rect x="988" y="537" width="9" height="12" fill="#2bc87c"/>
<rect x="1003" y="539" width="1" height="24" fill="#2bc87c"/>
<rect x="999" y="553" width="9" height="3" fill="#2bc87c"/>
<rect x="1015" y="549" width="1" height="12" fill="#2bc87c"/>
<rect x="1011" y="554" width="9" height="6" fill="#2bc87c"/>
<path d="M1026.5,526V530M1026.5,576V585" stroke="#f0564e" stroke-width="1"/>
<rect x="1022.5" y="530.5" width="8" height="45" fill="none" stroke="#f0564e" stroke-width="1"/>
<rect x="1037" y="518" width="1" height="41" fill="#2bc87c"/>
<rect x="1033" y="523" width="9" height="35" fill="#2bc87c"/>
<path d="M1049.5,525V528" stroke="#f0564e" stroke-width="1"/>
<rect x="1045.5" y="528.5" width="8" height="13" fill="none" stroke="#f0564e" stroke-width="1"/>
<rect x="1060" y="503" width="1" height="25" fill="#2bc87c"/>
<rect x="1056" y="507" width="9" height="10" fill="#2bc87c"/>
<rect x="1072" y="512" width="1" height="21" fill="#2bc87c"/>
<rect x="1068" y="521" width="9" height="3" fill="#2bc87c"/>
<rect x="1083" y="511" width="1" height="26" fill="#2bc87c"/>
<rect x="1079" y="525" width="9" height="8" fill="#2bc87c"/>
<path d="M1094.5,504V506M1094.5,535V538" stroke="#f0564e" stroke-width="1"/>
<rect x="1090.5" y="506.5" width="8" height="28" fill="none" stroke="#f0564e" stroke-width="1"/>
<path d="M1106.5,489V493M1106.5,505V511" stroke="#f0564e" stroke-width="1"/>
<rect x="1102.5" y="493.5" width="8" height="11" fill="none" stroke="#f0564e" stroke-width="1"/>
<path d="M1117.5,473V474" stroke="#f0564e" stroke-width="1"/>
<rect x="1113.5" y="474.5" width="8" height="19" fill="none" stroke="#f0564e" stroke-width="1"/>
<path d="M1129.5,466V483M1129.5,486V487" stroke="#f0564e" stroke-width="1"/>
<rect x="1125.5" y="483.5" width="8" height="2" fill="none" stroke="#f0564e" stroke-width="1"/>
<rect x="1140" y="473" width="1" height="20" fill="#2bc87c"/>
<rect x="1136" y="482" width="9" height="9" fill="#2bc87c"/>
<path d="M1151.5,461V462" stroke="#f0564e" stroke-width="1"/>
<rect x="1147.5" y="462.5" width="8" height="28" fill="none" stroke="#f0564e" stroke-width="1"/>
<rect x="1163" y="463" width="1" height="12" fill="#2bc87c"/>
<rect x="1159" y="468" width="9" height="4" fill="#2bc87c"/>
<rect x="1174" y="458" width="1" height="23" fill="#2bc87c"/>
<rect x="1170" y="462" width="9" height="15" fill="#2bc87c"/>
<rect x="1186" y="463" width="1" height="43" fill="#2bc87c"/>
<rect x="1182" y="476" width="9" height="29" fill="#2bc87c"/>
<rect x="1197" y="507" width="1" height="17" fill="#2bc87c"/>
<rect x="1193" y="512" width="9" height="5" fill="#2bc87c"/>
<path d="M1208.5,493V501M1208.5,504V521" stroke="#f0564e" stroke-width="1"/>
<rect x="1204.5" y="501.5" width="8" height="2" fill="none" stroke="#f0564e" stroke-width="1"/>
<path d="M1220.5,488V490M1220.5,500V504" stroke="#f0564e" stroke-width="1"/>
<rect x="1216.5" y="490.5" width="8" height="9" fill="none" stroke="#f0564e" stroke-width="1"/>
<path d="M1231.5,474V483M1231.5,489V498" stroke="#f0564e" stroke-width="1"/>
<rect x="1227.5" y="483.5" width="8" height="5" fill="none" stroke="#f0564e" stroke-width="1"/>
<rect x="1243" y="487" width="1" height="23" fill="#2bc87c"/>
<rect x="1239" y="489" width="9" height="20" fill="#2bc87c"/>
<rect x="1250.5" y="445.5" width="8" height="30" fill="none" stroke="#f0564e" stroke-width="1"/>
<path d="M1265.5,432V435M1265.5,445V451" stroke="#f0564e" stroke-width="1"/>
<rect x="1261.5" y="435.5" width="8" height="9" fill="none" stroke="#f0564e" stroke-width="1"/>
<rect x="1277" y="429" width="1" height="18" fill="#2bc87c"/>
<rect x="1273" y="439" width="9" height="8" fill="#2bc87c"/>
<rect x="1288" y="424" width="1" height="24" fill="#2bc87c"/>
<rect x="1284" y="431" width="9" height="5" fill="#2bc87c"/>
<rect x="1300" y="438" width="1" height="10" fill="#2bc87c"/>
<rect x="1296" y="439" width="9" height="7" fill="#2bc87c"/>
<path d="M1311.5,446V448M1311.5,459V462" stroke="#f0564e" stroke-width="1"/>
<rect x="1307.5" y="448.5" width="8" height="10" fill="none" stroke="#f0564e" stroke-width="1"/>
<rect x="1322" y="439" width="1" height="15" fill="#2bc87c"/>
<rect x="1318" y="442" width="9" height="2" fill="#2bc87c"/>
<rect x="1334" y="444" width="1" height="10" fill="#2bc87c"/>
<rect x="1330" y="445" width="9" height="4" fill="#2bc87c"/>
<path d="M1345.5,445V447" stroke="#f0564e" stroke-width="1"/>
<rect x="1341.5" y="431.5" width="8" height="13" fill="none" stroke="#f0564e" stroke-width="1"/>
<path d="M1357.5,422V424M1357.5,434V435" stroke="#f0564e" stroke-width="1"/>
<rect x="1353.5" y="424.5" width="8" height="9" fill="none" stroke="#f0564e" stroke-width="1"/>
<path d="M1368.5,423V425M1368.5,428V431" stroke="#f0564e" stroke-width="1"/>
<rect x="1364.5" y="425.5" width="8" height="2" fill="none" stroke="#f0564e" stroke-width="1"/>
<rect x="1379" y="429" width="1" height="19" fill="#2bc87c"/>
<rect x="1375" y="430" width="9" height="15" fill="#2bc87c"/>
<rect x="1391" y="439" width="1" height="14" fill="#2bc87c"/>
<rect x="1387" y="443" width="9" height="4" fill="#2bc87c"/>
<path d="M1402.5,408V409M1402.5,447V453" stroke="#f0564e" stroke-width="1"/>
<rect x="1398.5" y="409.5" width="8" height="37" fill="none" stroke="#f0564e" stroke-width="1"/>
<rect x="1414" y="403" width="1" height="16" fill="#2bc87c"/>
<rect x="1410" y="409" width="9" height="2" fill="#2bc87c"/>
<path d="M1425.5,408V411M1425.5,423V427" stroke="#f0564e" stroke-width="1"/>
<rect x="1421.5" y="411.5" width="8" height="11" fill="none" stroke="#f0564e" stroke-width="1"/>
<rect x="1436" y="417" width="1" height="21" fill="#2bc87c"/>
<rect x="1432" y="417" width="9" height="17" fill="#2bc87c"/>
<rect x="1448" y="432" width="1" height="26" fill="#2bc87c"/>
<rect x="1444" y="434" width="9" height="17" fill="#2bc87c"/>
<path d="M1459.5,444V452M1459.5,454V457" stroke="#f0564e" stroke-width="1"/>
<rect x="1455.5" y="452.5" width="8" height="1" fill="none" stroke="#f0564e" stroke-width="1"/>
<path d="M1471.5,440V443M1471.5,450V454" stroke="#f0564e" stroke-width="1"/>
<rect x="1467.5" y="443.5" width="8" height="6" fill="none" stroke="#f0564e" stroke-width="1"/>
<rect x="1482" y="439" width="1" height="15" fill="#2bc87c"/>
<rect x="1478" y="446" width="9" height="7" fill="#2bc87c"/>
<path d="M1493.5,452V453" stroke="#f0564e" stroke-width="1"/>
<rect x="1489.5" y="435.5" width="8" height="16" fill="none" stroke="#f0564e" stroke-width="1"/>
<g stroke="#2f8fe6" stroke-width="1.4" fill="none"><path d="M855.6,506.6 L1664.9,358.7"/><path d="M1026,579.8 L1664.9,358.7"/></g>
<path d="M11,435.6 H1692" stroke="#f0564e" stroke-width="1.2" stroke-dasharray="4 2"/>
<path d="M560.7,335.5 H593" stroke="#ffd800" stroke-width="1.2" stroke-dasharray="3 2"/>
<text x="593.05" y="341.8" fill="#ffd800" font-size="20.3" textLength="70.60" lengthAdjust="spacingAndGlyphs">4325.28</text>
<path d="M991,583.3 H1026" stroke="#ffd800" stroke-width="1.2" stroke-dasharray="3 2"/>
<text x="921.26" y="590" fill="#ffd800" font-size="20.3" textLength="70.08" lengthAdjust="spacingAndGlyphs">3491.58</text>
<ellipse cx="1445.9" cy="440.8" rx="82.7" ry="35.3" fill="none" stroke="#f51f17" stroke-width="4.5"/>
</g>
<text x="1698.26" y="203.4" fill="#e3e4e6" font-size="20.6" textLength="68.97" lengthAdjust="spacingAndGlyphs">4796.31</text>
<text x="1698.26" y="260.03999999999996" fill="#e3e4e6" font-size="20.6" textLength="68.97" lengthAdjust="spacingAndGlyphs">4605.55</text>
<text x="1698.26" y="316.67999999999995" fill="#e3e4e6" font-size="20.6" textLength="68.97" lengthAdjust="spacingAndGlyphs">4414.79</text>
<text x="1698.26" y="373.32" fill="#e3e4e6" font-size="20.6" textLength="68.97" lengthAdjust="spacingAndGlyphs">4224.03</text>
<text x="1698.26" y="429.96" fill="#e3e4e6" font-size="20.6" textLength="68.97" lengthAdjust="spacingAndGlyphs">4032.27</text>
<text x="1697.97" y="486.59999999999997" fill="#e3e4e6" font-size="20.6" textLength="69.27" lengthAdjust="spacingAndGlyphs">3842.51</text>
<text x="1697.97" y="543.24" fill="#e3e4e6" font-size="20.6" textLength="69.26" lengthAdjust="spacingAndGlyphs">3651.75</text>
<text x="1697.97" y="599.88" fill="#e3e4e6" font-size="20.6" textLength="69.27" lengthAdjust="spacingAndGlyphs">3460.99</text>
<rect x="1694" y="420.1" width="99" height="29.6" fill="#ef5955"/>
<text x="1698.47" y="441.9" fill="#ffffff" font-size="20.6" textLength="69.17" lengthAdjust="spacingAndGlyphs">3990.56</text>
<rect x="0" y="358" width="9" height="149.7" fill="#2e3949"/>
<path d="M0,428 l4.5,4.7 l-4.5,4.7 z" fill="#8a93a0"/>
<text x="17.08" y="642.1" fill="#e3e4e6" font-size="20.5" textLength="58.27" lengthAdjust="spacingAndGlyphs">MACD</text>
<path d="M83,631.8 h7.1 l-3.55,5.2 z" fill="#8a93a0"/>
<text x="104.25" y="642.1" fill="#e4528b" font-size="20.5" textLength="93.34" lengthAdjust="spacingAndGlyphs">DIF:29.005</text>
<text x="211.36" y="642.1" fill="#6cc4f2" font-size="20.5" textLength="101.36" lengthAdjust="spacingAndGlyphs">DEA:42.178</text>
<text x="326.40" y="642.1" fill="#f06c5a" font-size="20.5" textLength="129.02" lengthAdjust="spacingAndGlyphs">MACD:-26.345</text>
<g fill="none" stroke="#8a93a0" stroke-width="1.5"><path d="M1667.5,643 L1684.5,626 M1678,626 h6.5 v6.5 M1667.5,636.5 v6.5 h6.5"/></g>
<g clip-path="url(#cm)">
<rect x="9" y="666" width="5" height="44" fill="#f0564e"/>
<rect x="20" y="672" width="5" height="38" fill="#f0564e"/>
<rect x="32" y="686" width="5" height="24" fill="#f0564e"/>
<rect x="43" y="706" width="5" height="4" fill="#f0564e"/>
<rect x="54" y="709" width="5" height="23" fill="#2bc87c"/>
<rect x="66" y="709" width="5" height="39" fill="#2bc87c"/>
<rect x="77" y="709" width="5" height="41" fill="#2bc87c"/>
<rect x="89" y="709" width="5" height="51" fill="#2bc87c"/>
<rect x="100" y="709" width="5" height="53" fill="#2bc87c"/>
<rect x="111" y="709" width="5" height="43" fill="#2bc87c"/>
<rect x="123" y="709" width="5" height="34" fill="#2bc87c"/>
<rect x="134" y="709" width="5" height="22" fill="#2bc87c"/>
<rect x="146" y="709" width="5" height="2" fill="#2bc87c"/>
<rect x="157" y="698" width="5" height="12" fill="#f0564e"/>
<rect x="168" y="697" width="5" height="13" fill="#f0564e"/>
<rect x="180" y="696" width="5" height="14" fill="#f0564e"/>
<rect x="191" y="698" width="5" height="12" fill="#f0564e"/>
<rect x="203" y="695" width="5" height="15" fill="#f0564e"/>
<rect x="214" y="693" width="5" height="17" fill="#f0564e"/>
<rect x="225" y="690" width="5" height="20" fill="#f0564e"/>
<rect x="237" y="683" width="5" height="27" fill="#f0564e"/>
<rect x="248" y="680" width="5" height="30" fill="#f0564e"/>
<rect x="260" y="683" width="5" height="27" fill="#f0564e"/>
<rect x="271" y="688" width="5" height="22" fill="#f0564e"/>
<rect x="282" y="694" width="5" height="16" fill="#f0564e"/>
<rect x="294" y="699" width="5" height="11" fill="#f0564e"/>
<rect x="305" y="695" width="5" height="15" fill="#f0564e"/>
<rect x="317" y="696" width="5" height="14" fill="#f0564e"/>
<rect x="328" y="687" width="5" height="23" fill="#f0564e"/>
<rect x="339" y="681" width="5" height="29" fill="#f0564e"/>
<rect x="351" y="674" width="5" height="36" fill="#f0564e"/>
<rect x="362" y="675" width="5" height="35" fill="#f0564e"/>
<rect x="374" y="676" width="5" height="34" fill="#f0564e"/>
<rect x="385" y="683" width="5" height="27" fill="#f0564e"/>
<rect x="396" y="679" width="5" height="31" fill="#f0564e"/>
<rect x="408" y="674" width="5" height="36" fill="#f0564e"/>
<rect x="419" y="668" width="5" height="42" fill="#f0564e"/>
<rect x="431" y="667" width="5" height="43" fill="#f0564e"/>
<rect x="442" y="672" width="5" height="38" fill="#f0564e"/>
<rect x="453" y="671" width="5" height="39" fill="#f0564e"/>
<rect x="465" y="674" width="5" height="36" fill="#f0564e"/>
<rect x="476" y="678" width="5" height="32" fill="#f0564e"/>
<rect x="488" y="684" width="5" height="26" fill="#f0564e"/>
<rect x="499" y="691" width="5" height="19" fill="#f0564e"/>
<rect x="510" y="689" width="5" height="21" fill="#f0564e"/>
<rect x="522" y="690" width="5" height="20" fill="#f0564e"/>
<rect x="533" y="686" width="5" height="24" fill="#f0564e"/>
<rect x="545" y="684" width="5" height="26" fill="#f0564e"/>
<rect x="556" y="684" width="5" height="26" fill="#f0564e"/>
<rect x="567" y="689" width="5" height="21" fill="#f0564e"/>
<rect x="579" y="694" width="5" height="16" fill="#f0564e"/>
<rect x="590" y="703" width="5" height="7" fill="#f0564e"/>
<rect x="602" y="709" width="5" height="11" fill="#2bc87c"/>
<rect x="613" y="709" width="5" height="22" fill="#2bc87c"/>
<rect x="624" y="709" width="5" height="27" fill="#2bc87c"/>
<rect x="636" y="709" width="5" height="25" fill="#2bc87c"/>
<rect x="647" y="709" width="5" height="36" fill="#2bc87c"/>
<rect x="659" y="709" width="5" height="44" fill="#2bc87c"/>
<rect x="670" y="709" width="5" height="52" fill="#2bc87c"/>
<rect x="681" y="709" width="5" height="57" fill="#2bc87c"/>
<rect x="693" y="709" width="5" height="57" fill="#2bc87c"/>
<rect x="704" y="709" width="5" height="58" fill="#2bc87c"/>
<rect x="716" y="709" width="5" height="57" fill="#2bc87c"/>
<rect x="727" y="709" width="5" height="48" fill="#2bc87c"/>
<rect x="738" y="709" width="5" height="37" fill="#2bc87c"/>
<rect x="750" y="709" width="5" height="23" fill="#2bc87c"/>
<rect x="761" y="709" width="5" height="9" fill="#2bc87c"/>
<rect x="773" y="709" width="5" height="15" fill="#2bc87c"/>
<rect x="784" y="709" width="5" height="17" fill="#2bc87c"/>
<rect x="795" y="709" width="5" height="21" fill="#2bc87c"/>
<rect x="807" y="709" width="5" height="25" fill="#2bc87c"/>
<rect x="818" y="709" width="5" height="23" fill="#2bc87c"/>
<rect x="830" y="709" width="5" height="24" fill="#2bc87c"/>
<rect x="841" y="709" width="5" height="29" fill="#2bc87c"/>
<rect x="852" y="709" width="5" height="33" fill="#2bc87c"/>
<rect x="864" y="709" width="5" height="39" fill="#2bc87c"/>
<rect x="875" y="709" width="5" height="44" fill="#2bc87c"/>
<rect x="887" y="709" width="5" height="44" fill="#2bc87c"/>
<rect x="898" y="709" width="5" height="35" fill="#2bc87c"/>
<rect x="909" y="709" width="5" height="34" fill="#2bc87c"/>
<rect x="921" y="709" width="5" height="35" fill="#2bc87c"/>
<rect x="932" y="709" width="5" height="24" fill="#2bc87c"/>
<rect x="944" y="709" width="5" height="6" fill="#2bc87c"/>
<rect x="955" y="701" width="5" height="9" fill="#f0564e"/>
<rect x="966" y="696" width="5" height="14" fill="#f0564e"/>
<rect x="978" y="702" width="5" height="8" fill="#f0564e"/>
<rect x="989" y="707" width="5" height="3" fill="#f0564e"/>
<rect x="1001" y="709" width="5" height="3" fill="#2bc87c"/>
<rect x="1012" y="709" width="5" height="6" fill="#2bc87c"/>
<rect x="1023" y="706" width="5" height="4" fill="#f0564e"/>
<rect x="1035" y="708" width="5" height="2" fill="#f0564e"/>
<rect x="1046" y="700" width="5" height="10" fill="#f0564e"/>
<rect x="1058" y="690" width="5" height="20" fill="#f0564e"/>
<rect x="1069" y="686" width="5" height="24" fill="#f0564e"/>
<rect x="1080" y="687" width="5" height="23" fill="#f0564e"/>
<rect x="1092" y="680" width="5" height="30" fill="#f0564e"/>
<rect x="1103" y="672" width="5" height="38" fill="#f0564e"/>
<rect x="1115" y="663" width="5" height="47" fill="#f0564e"/>
<rect x="1126" y="661" width="5" height="49" fill="#f0564e"/>
<rect x="1137" y="665" width="5" height="45" fill="#f0564e"/>
<rect x="1149" y="660" width="5" height="50" fill="#f0564e"/>
<rect x="1160" y="662" width="5" height="48" fill="#f0564e"/>
<rect x="1172" y="667" width="5" height="43" fill="#f0564e"/>
<rect x="1183" y="681" width="5" height="29" fill="#f0564e"/>
<rect x="1194" y="694" width="5" height="16" fill="#f0564e"/>
<rect x="1206" y="699" width="5" height="11" fill="#f0564e"/>
<rect x="1217" y="699" width="5" height="11" fill="#f0564e"/>
<rect x="1229" y="698" width="5" height="12" fill="#f0564e"/>
<rect x="1240" y="705" width="5" height="5" fill="#f0564e"/>
<rect x="1251" y="691" width="5" height="19" fill="#f0564e"/>
<rect x="1263" y="680" width="5" height="30" fill="#f0564e"/>
<rect x="1274" y="678" width="5" height="32" fill="#f0564e"/>
<rect x="1286" y="676" width="5" height="34" fill="#f0564e"/>
<rect x="1297" y="679" width="5" height="31" fill="#f0564e"/>
<rect x="1308" y="685" width="5" height="25" fill="#f0564e"/>
<rect x="1320" y="688" width="5" height="22" fill="#f0564e"/>
<rect x="1331" y="693" width="5" height="17" fill="#f0564e"/>
<rect x="1343" y="693" width="5" height="17" fill="#f0564e"/>
<rect x="1354" y="692" width="5" height="18" fill="#f0564e"/>
<rect x="1365" y="693" width="5" height="17" fill="#f0564e"/>
<rect x="1377" y="701" width="5" height="9" fill="#f0564e"/>
<rect x="1388" y="707" width="5" height="3" fill="#f0564e"/>
<rect x="1400" y="701" width="5" height="9" fill="#f0564e"/>
<rect x="1411" y="699" width="5" height="11" fill="#f0564e"/>
<rect x="1422" y="699" width="5" height="11" fill="#f0564e"/>
<rect x="1434" y="707" width="5" height="3" fill="#f0564e"/>
<rect x="1445" y="709" width="5" height="10" fill="#2bc87c"/>
<rect x="1457" y="709" width="5" height="17" fill="#2bc87c"/>
<rect x="1468" y="709" width="5" height="19" fill="#2bc87c"/>
<rect x="1479" y="709" width="5" height="23" fill="#2bc87c"/>
<rect x="1491" y="709" width="5" height="20" fill="#2bc87c"/>
<polyline points="0.5,745.5 11.5,740.5 23.5,735.5 34.5,732.5 46.5,732.5 57.5,735.5 68.5,739.5 80.5,744.5 91.5,750.5 103.5,757.5 114.5,762.5 125.5,766.5 137.5,769.5 148.5,769.5 160.5,767.5 171.5,766.5 182.5,764.5 194.5,763.5 205.5,761.5 217.5,759.5 228.5,756.5 239.5,753.5 251.5,750.5 262.5,746.5 274.5,744.5 285.5,742.5 296.5,740.5 308.5,738.5 319.5,737.5 331.5,734.5 342.5,730.5 353.5,726.5 365.5,722.5 376.5,718.5 388.5,714.5 399.5,710.5 410.5,706.5 422.5,701.5 433.5,696.5 445.5,691.5 456.5,686.5 467.5,682.5 479.5,678.5 490.5,675.5 502.5,672.5 513.5,670.5 524.5,667.5 536.5,664.5 547.5,661.5 559.5,658.5 570.5,655.5 581.5,653.5 593.5,653.5 604.5,654.5 616.5,656.5 627.5,659.5 638.5,662.5 650.5,667.5 661.5,672.5 673.5,678.5 684.5,685.5 695.5,692.5 707.5,699.5 718.5,706.5 730.5,712.5 741.5,717.5 752.5,719.5 764.5,720.5 775.5,722.5 787.5,724.5 798.5,726.5 809.5,729.5 821.5,732.5 832.5,735.5 844.5,738.5 855.5,742.5 866.5,747.5 878.5,752.5 889.5,758.5 901.5,762.5 912.5,766.5 923.5,770.5 935.5,773.5 946.5,773.5 958.5,772.5 969.5,771.5 980.5,770.5 992.5,769.5 1003.5,770.5 1015.5,770.5 1026.5,770.5 1037.5,770.5 1049.5,768.5 1060.5,766.5 1072.5,763.5 1083.5,760.5 1094.5,757.5 1106.5,752.5 1117.5,746.5 1129.5,740.5 1140.5,734.5 1151.5,728.5 1163.5,722.5 1174.5,717.5 1186.5,713.5 1197.5,712.5 1208.5,710.5 1220.5,709.5 1231.5,708.5 1243.5,707.5 1254.5,705.5 1265.5,701.5 1277.5,697.5 1288.5,693.5 1300.5,689.5 1311.5,686.5 1322.5,684.5 1334.5,682.5 1345.5,679.5 1357.5,677.5 1368.5,675.5 1379.5,674.5 1391.5,674.5 1402.5,673.5 1414.5,671.5 1425.5,670.5 1436.5,670.5 1448.5,671.5 1459.5,673.5 1471.5,675.5 1482.5,678.5 1493.5,680.5" fill="none" stroke="#6cc4f2" stroke-width="1" shape-rendering="crispEdges"/>
<polyline points="0.5,724.5 11.5,718.5 23.5,717.5 34.5,720.5 46.5,730.5 57.5,745.5 68.5,758.5 80.5,764.5 91.5,775.5 103.5,783.5 114.5,783.5 125.5,782.5 137.5,779.5 148.5,769.5 160.5,762.5 171.5,759.5 182.5,757.5 194.5,757.5 205.5,754.5 217.5,751.5 228.5,747.5 239.5,740.5 251.5,735.5 262.5,733.5 274.5,733.5 285.5,734.5 296.5,735.5 308.5,731.5 319.5,730.5 331.5,723.5 342.5,716.5 353.5,708.5 365.5,704.5 376.5,701.5 388.5,701.5 399.5,695.5 410.5,689.5 422.5,680.5 433.5,675.5 445.5,672.5 456.5,667.5 467.5,664.5 479.5,662.5 490.5,662.5 502.5,663.5 513.5,659.5 524.5,657.5 536.5,652.5 547.5,648.5 559.5,645.5 570.5,645.5 581.5,645.5 593.5,649.5 604.5,658.5 616.5,666.5 627.5,672.5 638.5,674.5 650.5,684.5 661.5,694.5 673.5,704.5 684.5,713.5 695.5,720.5 707.5,728.5 718.5,734.5 730.5,735.5 741.5,734.5 752.5,730.5 764.5,724.5 775.5,729.5 787.5,732.5 798.5,736.5 809.5,741.5 821.5,743.5 832.5,746.5 844.5,752.5 855.5,758.5 866.5,766.5 878.5,773.5 889.5,779.5 901.5,779.5 912.5,782.5 923.5,787.5 935.5,784.5 946.5,775.5 958.5,768.5 969.5,764.5 980.5,766.5 992.5,768.5 1003.5,771.5 1015.5,773.5 1026.5,768.5 1037.5,769.5 1049.5,763.5 1060.5,756.5 1072.5,752.5 1083.5,749.5 1094.5,742.5 1106.5,733.5 1117.5,723.5 1129.5,716.5 1140.5,712.5 1151.5,704.5 1163.5,699.5 1174.5,696.5 1186.5,699.5 1197.5,704.5 1208.5,705.5 1220.5,704.5 1231.5,702.5 1243.5,705.5 1254.5,696.5 1265.5,687.5 1277.5,682.5 1288.5,676.5 1300.5,674.5 1311.5,674.5 1322.5,673.5 1334.5,673.5 1345.5,671.5 1357.5,669.5 1368.5,667.5 1379.5,670.5 1391.5,673.5 1402.5,669.5 1414.5,666.5 1425.5,665.5 1436.5,669.5 1448.5,675.5 1459.5,681.5 1471.5,684.5 1482.5,689.5 1493.5,689.5" fill="none" stroke="#e4528b" stroke-width="1" shape-rendering="crispEdges"/>
</g>
<path d="M1467.8,757.5 L1508.4,741.2 L1511.9,747.9 L1524.1,732.5 L1504.6,730.6 L1505.6,735.8 Z" fill="#f51f17"/>
<text x="1698.06" y="685.6999999999999" fill="#e3e4e6" font-size="20.6" textLength="58.89" lengthAdjust="spacingAndGlyphs">44.893</text>
<text x="1697.61" y="744.8" fill="#e3e4e6" font-size="20.6" textLength="67.62" lengthAdjust="spacingAndGlyphs">-40.855</text>
<text x="1697.62" y="804.6" fill="#e3e4e6" font-size="20.6" textLength="78.15" lengthAdjust="spacingAndGlyphs">-126.603</text>
<text x="102.19" y="820" fill="#8a93a0" font-size="20.3" textLength="22.40" lengthAdjust="spacingAndGlyphs">21</text>
<text x="193.31" y="820" fill="#8a93a0" font-size="20.3" textLength="23.63" lengthAdjust="spacingAndGlyphs">Jul</text>
<text x="330.75" y="820" fill="#8a93a0" font-size="20.3" textLength="23.27" lengthAdjust="spacingAndGlyphs">20</text>
<text x="415.66" y="820" fill="#8a93a0" font-size="20.3" textLength="36.36" lengthAdjust="spacingAndGlyphs">Aug</text>
<text x="592.54" y="820" fill="#8a93a0" font-size="20.3" textLength="23.53" lengthAdjust="spacingAndGlyphs">22</text>
<text x="674.83" y="820" fill="#8a93a0" font-size="20.3" textLength="39.31" lengthAdjust="spacingAndGlyphs">Sept</text>
<text x="831.87" y="820" fill="#8a93a0" font-size="20.3" textLength="22.73" lengthAdjust="spacingAndGlyphs">21</text>
<text x="918.64" y="820" fill="#8a93a0" font-size="20.3" textLength="31.51" lengthAdjust="spacingAndGlyphs">Oct</text>
<text x="1070.94" y="820" fill="#8a93a0" font-size="20.3" textLength="23.49" lengthAdjust="spacingAndGlyphs">20</text>
<text x="1155.35" y="820" fill="#8a93a0" font-size="20.3" textLength="35.72" lengthAdjust="spacingAndGlyphs">Nov</text>
<text x="1310.93" y="820" fill="#8a93a0" font-size="20.3" textLength="22.86" lengthAdjust="spacingAndGlyphs">18</text>
<text x="1396.67" y="820" fill="#8a93a0" font-size="20.3" textLength="33.12" lengthAdjust="spacingAndGlyphs">Dec</text>
<rect x="828" y="828" width="150" height="7" fill="#2f3a4a"/>
<path d="M897,835 l6,-4.5 l6,4.5 z" fill="#8a93a0"/>
</svg>
</body></html>
